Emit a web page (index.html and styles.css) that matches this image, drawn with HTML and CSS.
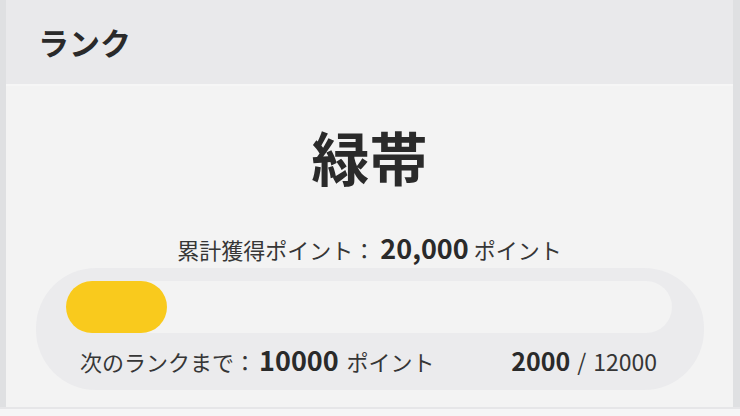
FILE: index.html
```html
<!DOCTYPE html>
<html lang="ja">
<head>
    <meta charset="UTF-8">
    <meta name="viewport" content="width=device-width, initial-scale=1.0">
    <title>ランク</title>
    <link rel="stylesheet" href="styles.css">
</head>
<body>
    <div class="page">
        <section class="rank-card">
            <div class="rank-header">
                <h2>ランク</h2>
            </div>
            <div class="rank-body">
                <h1 class="rank-name">緑帯</h1>
                <p class="total">累計獲得ポイント： <strong>20,000</strong> ポイント</p>
                <div class="progress">
                    <div class="track">
                        <div class="fill" style="width: 16.7%"></div>
                    </div>
                    <div class="progress-info">
                        <span>次のランクまで：<strong class="remain">10000</strong> ポイント</span>
                        <span class="count"><strong>2000</strong><span class="slash">/</span>12000</span>
                    </div>
                </div>
            </div>
        </section>
    </div>
</body>
</html>
```

FILE: styles.css
```css
body {
    margin: 0;
    background: #f5f5f6;
    font-family: "Noto Sans CJK JP", "Noto Sans", sans-serif;
    color: #363636;
}
.page {
    background: #dfe0e2;
    padding: 0 7px 0 6px;
    border-bottom: 2px solid #e6e6e8;
}
.rank-card {
    background: #f3f3f3;
}
.rank-header {
    height: 84px;
    background: #e9e9eb;
    border-bottom: 2px solid #f6f6f6;
    display: flex;
    align-items: center;
    padding-left: 32px;
}
.rank-header h2 {
    margin: 0 0 2px;
    font-size: 31px;
    font-weight: 700;
    color: #2a2a2a;
}
.rank-body {
    padding: 41px 0 17px;
}
.rank-name {
    margin: 0;
    text-align: center;
    font-size: 58px;
    line-height: 58px;
    font-weight: 700;
    color: #2a2a2a;
}
.total {
    margin: 48px 0 0;
    text-align: center;
    font-size: 22px;
    line-height: 30px;
}
.total strong, .progress-info strong {
    font-size: 27px;
    font-weight: 700;
    color: #2a2a2a;
}
.progress {
    margin: 4px 29px 0 30px;
    background: #ebebed;
    border-radius: 60px;
    padding: 13px 32px 14px 30px;
}
.track {
    height: 52px;
    background: #f3f3f3;
    border-radius: 26px;
}
.fill {
    height: 100%;
    background: #f9ca1d;
    border-radius: 26px;
}
.progress-info {
    display: flex;
    justify-content: space-between;
    margin-top: 12px;
    padding: 0 15px 0 14px;
    font-size: 22px;
    line-height: 30px;
}
.progress-info .remain {
    margin: 0 3px 0 3px;
}
.progress-info .count {
    font-size: 23px;
}
.progress-info .count strong {
    font-size: 25px;
}
.slash {
    margin: 0 7px;
}
```
